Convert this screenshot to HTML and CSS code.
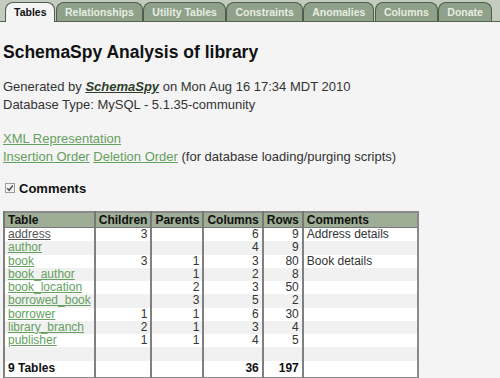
FILE: index.html
```html
<!DOCTYPE html>
<html lang="en">
<head>
    <meta charset="UTF-8">
    <title>SchemaSpy - library</title>
    <link rel="stylesheet" href="styles.css">
</head>
<body>
    <div class="tabbar">
        <span class="tab active">Tables</span>
        <span class="tab">Relationships</span>
        <span class="tab">Utility Tables</span>
        <span class="tab">Constraints</span>
        <span class="tab">Anomalies</span>
        <span class="tab">Columns</span>
        <span class="tab">Donate</span>
    </div>

    <div class="content">
        <h1>SchemaSpy Analysis of library</h1>
        <p class="info">
            Generated by <a class="brand" href="#">SchemaSpy</a> on Mon Aug 16 17:34 MDT 2010<br>
            Database Type: MySQL - 5.1.35-community
        </p>
        <p class="links">
            <a href="#">XML Representation</a><br>
            <a href="#">Insertion Order</a> <a href="#">Deletion Order</a> (for database loading/purging scripts)
        </p>
        <label class="toggle">
            <svg class="check" width="10" height="10" viewBox="0 0 10 10">
                <rect x="0.5" y="0.5" width="9" height="9" fill="#f2f2f2" stroke="#9a9a9a"/>
                <path d="M2.2 5.2 L4.2 7.2 L7.8 2.6" fill="none" stroke="#555" stroke-width="1.6"/>
            </svg>
            Comments
        </label>

        <table class="tables">
            <thead>
                <tr>
                    <th class="c-name">Table</th>
                    <th class="c-children">Children</th>
                    <th class="c-parents">Parents</th>
                    <th class="c-columns">Columns</th>
                    <th class="c-rows">Rows</th>
                    <th class="c-comments">Comments</th>
                </tr>
            </thead>
            <tbody>
                <tr><td><a class="visited" href="#">address</a></td><td class="num">3</td><td class="num"></td><td class="num">6</td><td class="num">9</td><td>Address details</td></tr>
                <tr><td><a href="#">author</a></td><td class="num"></td><td class="num"></td><td class="num">4</td><td class="num">9</td><td></td></tr>
                <tr><td><a href="#">book</a></td><td class="num">3</td><td class="num">1</td><td class="num">3</td><td class="num">80</td><td>Book details</td></tr>
                <tr><td><a href="#">book_author</a></td><td class="num"></td><td class="num">1</td><td class="num">2</td><td class="num">8</td><td></td></tr>
                <tr><td><a href="#">book_location</a></td><td class="num"></td><td class="num">2</td><td class="num">3</td><td class="num">50</td><td></td></tr>
                <tr><td><a href="#">borrowed_book</a></td><td class="num"></td><td class="num">3</td><td class="num">5</td><td class="num">2</td><td></td></tr>
                <tr><td><a href="#">borrower</a></td><td class="num">1</td><td class="num">1</td><td class="num">6</td><td class="num">30</td><td></td></tr>
                <tr><td><a href="#">library_branch</a></td><td class="num">2</td><td class="num">1</td><td class="num">3</td><td class="num">4</td><td></td></tr>
                <tr><td><a href="#">publisher</a></td><td class="num">1</td><td class="num">1</td><td class="num">4</td><td class="num">5</td><td></td></tr>
                <tr><td>&nbsp;</td><td></td><td></td><td></td><td></td><td></td></tr>
            </tbody>
            <tfoot>
                <tr><td>9 Tables</td><td></td><td></td><td class="num">36</td><td class="num">197</td><td></td></tr>
            </tfoot>
        </table>
    </div>
</body>
</html>
```

FILE: styles.css
```css
body {
    margin: 0;
    background-color: #f4f4f4;
    font-family: "Liberation Sans", Arial, sans-serif;
    color: #333;
}
.tabbar {
    display: flex;
    align-items: flex-end;
    height: 21px;
    padding-left: 5px;
    background-color: #c3ccbf;
    border-bottom: 1px solid #56644f;
}
.tab {
    flex-shrink: 0;
    white-space: nowrap;
    height: 18px;
    line-height: 18px;
    padding: 0 8px;
    margin-right: 0.5px;
    font-size: 10.5px;
    font-weight: bold;
    color: #e6ede0;
    background-color: #8fa18a;
    border: 1px solid #4f5d4b;
    border-bottom: none;
    border-radius: 8px 8px 0 0;
}
.tab.active {
    color: #111;
    background-color: #f4f4f4;
    height: 19px;
    margin-bottom: -1px;
}
.content {
    padding-left: 3px;
}
h1 {
    margin: 20px 0 0;
    font-size: 17.5px;
    line-height: 20px;
    color: #111;
}
p {
    margin: 0;
    font-size: 13px;
    line-height: 18px;
}
.info {
    margin-top: 16px;
}
.brand {
    color: #2e3e2c;
    font-weight: bold;
    font-style: italic;
}
.links {
    margin-top: 16px;
}
a {
    color: #64a05e;
}
a.visited {
    color: #555;
}
.toggle {
    display: flex;
    align-items: center;
    gap: 4px;
    margin: 13px 0 0 2px;
    height: 18px;
    font-size: 13px;
    font-weight: bold;
    color: #111;
}
.tables {
    margin: 14px 0 0;
    border-collapse: collapse;
    border: 2px solid #8a8a8a;
    font-size: 12px;
    color: #333;
}
.tables th {
    height: 14px;
    padding: 0 3px;
    text-align: left;
    color: #111;
    background-color: #9dad96;
    border-left: 2px solid #777;
    border-bottom: 1px solid #777;
    line-height: 14px;
}
.tables td {
    height: 13.25px;
    line-height: 13.25px;
    padding: 0 3px;
    border-left: 2px solid #808080;
    background-color: #fff;
}
.tables tbody tr:nth-child(even) td {
    background-color: #f1f1f1;
}
.tables td.num {
    text-align: right;
}
.tables tfoot td {
    height: 15px;
    padding-top: 1px;
    font-weight: bold;
    color: #111;
}
.c-name { width: 80px; }
.c-children { width: 48px; }
.c-parents { width: 44px; }
.c-columns { width: 51px; }
.c-rows { width: 32px; }
.c-comments { width: 107px; }
```
